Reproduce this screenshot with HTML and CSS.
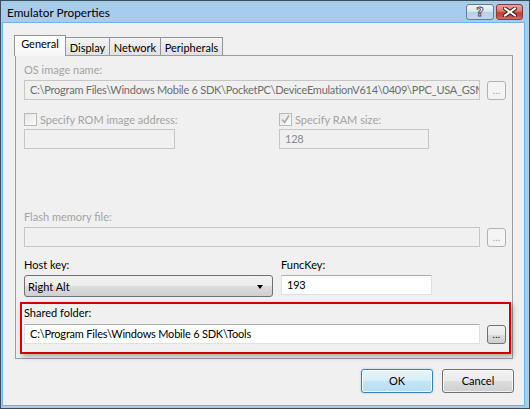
FILE: index.html
```html
<!DOCTYPE html>
<html>
<head>
<meta charset="utf-8">
<title>Emulator Properties</title>
<link rel="stylesheet" href="styles.css">
</head>
<body>
<div class="window">
  <div class="titlebar">
    <span class="title">Emulator Properties</span>
    <div class="caption-btns">
      <div class="cbtn help"><span class="qmark">?</span></div>
      <div class="cbtn close">
        <svg width="14" height="10" viewBox="0 0 14 10">
          <path d="M2 1.5 L12 8.5 M12 1.5 L2 8.5" stroke="#3a2020" stroke-width="4" stroke-linecap="square"/>
          <path d="M2 1.5 L12 8.5 M12 1.5 L2 8.5" stroke="#ffffff" stroke-width="2" stroke-linecap="square"/>
        </svg>
      </div>
    </div>
  </div>
  <div class="client">
    <div class="tabs">
      <div class="tab active">General</div>
      <div class="tab t-display">Display</div>
      <div class="tab t-network">Network</div>
      <div class="tab t-periph">Peripherals</div>
    </div>
    <div class="panel">
      <div class="label disabled first">OS image name:</div>
      <div class="field-row">
        <div class="input disabled path">C:\Program Files\Windows Mobile 6 SDK\PocketPC\DeviceEmulationV614\0409\PPC_USA_GSM</div>
        <div class="browse disabled">...</div>
      </div>

      <div class="pair check-pair">
        <div class="col">
          <div class="check-row">
            <span class="checkbox"></span>
            <span class="label disabled">Specify ROM image address:</span>
          </div>
          <div class="input disabled short"></div>
        </div>
        <div class="col">
          <div class="check-row">
            <span class="checkbox checked">
              <svg width="11" height="11" viewBox="0 0 11 11"><path d="M2 5.5 L4.5 8.5 L9 1.5" fill="none" stroke="#a8a8a8" stroke-width="1.6"/></svg>
            </span>
            <span class="label disabled">Specify RAM size:</span>
          </div>
          <div class="input disabled short value">128</div>
        </div>
      </div>

      <div class="label disabled flash">Flash memory file:</div>
      <div class="field-row">
        <div class="input disabled"></div>
        <div class="browse disabled">...</div>
      </div>

      <div class="pair host-pair">
        <div class="col">
          <div class="label">Host key:</div>
          <div class="combo">
            <span>Right Alt</span>
            <span class="arrow"></span>
          </div>
        </div>
        <div class="col func">
          <div class="label">FuncKey:</div>
          <div class="input enabled short">193</div>
        </div>
      </div>

      <div class="highlight">
        <div class="label">Shared folder:</div>
        <div class="field-row shared">
          <div class="input enabled">C:\Program Files\Windows Mobile 6 SDK\Tools</div>
          <div class="browse enabled">...</div>
        </div>
      </div>
    </div>
    <div class="buttons">
      <div class="btn default">OK</div>
      <div class="btn">Cancel</div>
    </div>
  </div>
</div>
</body>
</html>
```

FILE: styles.css
```css
* { box-sizing: border-box; }

html, body {
  margin: 0;
  padding: 0;
  background: #ffffff;
}

body {
  font-family: Lato, "Open Sans", sans-serif;
  font-size: 11px;
  color: #000;
}

.window {
  width: 530px;
  height: 409px;
  border: 1px solid #3b4c5e;
  background: #a7cbef;
  padding: 0 5px 3px 2px;
  display: flex;
  flex-direction: column;
}

.titlebar {
  height: 22px;
  margin: 0 -5px 0 -2px;
  padding: 0 6px 0 6px;
  display: flex;
  justify-content: space-between;
  align-items: flex-start;
  background: linear-gradient(#96d2dc 0, #a6cdea 2px, #a8cbef 100%);
}

.title {
  font-size: 11.8px;
  line-height: 22px;
  padding-top: 1px;
}

.caption-btns {
  display: flex;
  gap: 2px;
  margin-top: 3px;
}

.cbtn {
  height: 16px;
  border-radius: 3px;
  display: flex;
  align-items: center;
  justify-content: center;
}

.help {
  width: 28px;
  border: 1px solid #6b7a8e;
  background: linear-gradient(#eef2f8 0%, #dfe7f1 45%, #a9dcd6 50%, #bcd0ea 60%, #c6d6ec 100%);
}

.qmark {
  font-family: "DejaVu Sans", sans-serif;
  font-weight: bold;
  font-size: 13px;
  line-height: 14px;
  color: #fff;
  -webkit-text-stroke: 0.8px #39404a;
}

.close {
  width: 27px;
  border: 1px solid #7e3c3c;
  background: linear-gradient(#e8a39c 0%, #d77a72 45%, #c8453b 50%, #c4473f 75%, #d27168 100%);
}

.client {
  flex: 1;
  background: #f0f0f0;
  padding: 12px 11px 0 12px;
  box-shadow: 0 0 0 1px #6fb3e8;
  display: flex;
  flex-direction: column;
}

.tabs {
  display: flex;
  height: 20px;
  align-items: flex-end;
}

.tab {
  height: 18px;
  border: 1px solid #8f939b;
  border-bottom: none;
  border-left: none;
  background: linear-gradient(#f3f3f3, #e1e1e1);
  text-align: center;
  line-height: 17px;
  padding-top: 1px;
}

.tab.active {
  height: 21px;
  width: 52px;
  margin-left: -1px;
  margin-bottom: -1px;
  border-left: 1px solid #8f939b;
  background: linear-gradient(#ffffff, #f6f6f6);
  position: relative;
  z-index: 1;
  line-height: 16px;
  padding-top: 0;
}

.t-display { width: 44px; }
.t-network { width: 51px; }
.t-periph { width: 62px; }

.panel {
  height: 304px;
  border: 1px solid #9a9ca2;
  background: #f0f0f0;
  padding: 7px 6px 0 8px;
  display: flex;
  flex-direction: column;
}

.label {
  line-height: 14px;
  white-space: nowrap;
}

.label.disabled { color: #a3a3a3; }

.field-row {
  display: flex;
  align-items: center;
  gap: 7px;
  margin-top: 3px;
}

.input {
  height: 20px;
  line-height: 18px;
  padding: 0 5px;
  white-space: nowrap;
  overflow: hidden;
  letter-spacing: -0.2px;
}

.field-row .input { flex: 1; min-width: 0; }

.input.disabled {
  border: 1px solid #c6c6c6;
  background: #f0f0f0;
  color: #6d6d6d;
}

.input.path { letter-spacing: -0.25px; }

.input.value { color: #8a8a8a; }

.input.enabled {
  border: 1px solid #dde1e7;
  border-top-color: #abadb3;
  background: #ffffff;
}

.browse {
  flex: none;
  width: 19px;
  height: 19px;
  border-radius: 3px;
  text-align: center;
  line-height: 17px;
  font-size: 10px;
  letter-spacing: 0.3px;
}

.browse.disabled {
  border: 1px solid #adb2b5;
  background: #f4f4f4;
  color: #a0a0a0;
}

.browse.enabled {
  border: 1px solid #707070;
  background: linear-gradient(#f2f2f2 0%, #ebebeb 50%, #dddddd 50%, #cfcfcf 100%);
  color: #000;
}

.pair {
  display: grid;
  grid-template-columns: 255px 1fr;
}

.check-pair { margin-top: 13px; }

.check-row {
  display: flex;
  align-items: center;
  gap: 3px;
  height: 13px;
}

.checkbox {
  width: 13px;
  height: 13px;
  border: 1px solid #b9b9b9;
  background: linear-gradient(135deg, #e6e6e6, #fbfbfb);
  display: flex;
  align-items: center;
  justify-content: center;
}

.check-pair .input {
  margin-top: 3px;
}

.input.short { width: 151px; }
.check-pair .col:last-child .input.short { width: 150px; }

.flash { margin-top: 61px; }

.host-pair {
  margin-top: 11px;
}

.host-pair .label { margin-bottom: 3px; }

.func { padding-left: 2px; }

.combo {
  width: 249px;
  height: 22px;
  border: 1px solid #707070;
  border-radius: 3px;
  background: linear-gradient(#f2f2f2 0%, #ebebeb 50%, #dddddd 50%, #cfcfcf 100%);
  padding: 0 9px 0 3px;
  display: flex;
  align-items: center;
  justify-content: space-between;
}

.arrow {
  width: 0;
  height: 0;
  border-left: 3.5px solid transparent;
  border-right: 3.5px solid transparent;
  border-top: 4px solid #000;
  margin-top: 1px;
}

.highlight {
  margin: 5px -5px 0 -4px;
  height: 52px;
  border: 2px solid #d40000;
  padding: 2px 3px 0 2px;
  box-shadow: 2px 3px 5px rgba(0, 0, 0, 0.28);
}

.shared { margin-top: 4px; }

.buttons {
  display: flex;
  justify-content: flex-end;
  gap: 9px;
  margin-top: 10px;
  margin-right: -1px;
}

.btn {
  width: 72px;
  height: 24px;
  border: 1px solid #707070;
  border-radius: 3px;
  background: linear-gradient(#f2f2f2 0%, #ebebeb 50%, #dddddd 50%, #cfcfcf 100%);
  box-shadow: inset 0 0 0 1px rgba(255, 255, 255, 0.7);
  text-align: center;
  line-height: 22px;
}

.btn.default {
  border-color: #3c7fb1;
  background: linear-gradient(#e5f4fc 0%, #d6eefb 50%, #c4e5f6 50%, #b6ddf4 100%);
  box-shadow: inset 0 0 0 1px rgba(255, 255, 255, 0.8), 0 0 2px #7fc3ee;
}
```
